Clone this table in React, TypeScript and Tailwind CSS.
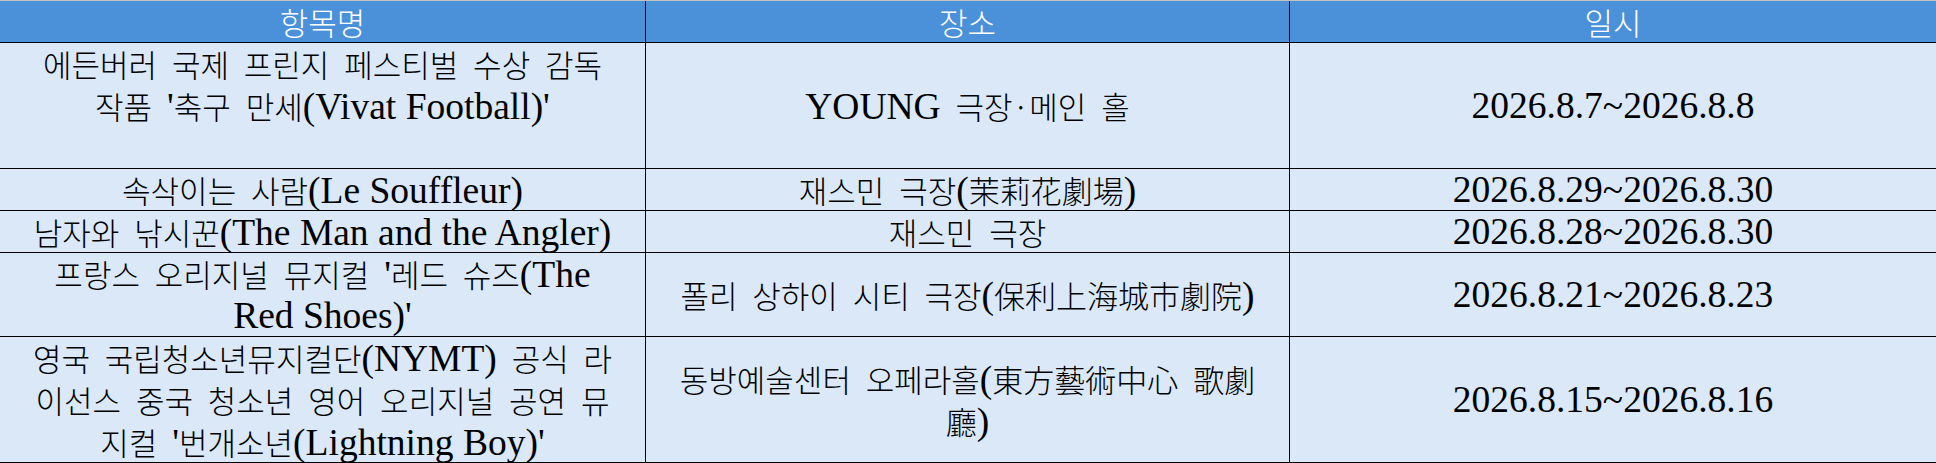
const LATIN = /([A-Za-z0-9.~()'\-]+(?: +[A-Za-z0-9.~()'\-]+)*)/

function Mixed({ text }: { text: string }) {
  const parts = text.split(LATIN)
  return (
    <>
      {parts.map((p, i) =>
        p === '' ? null : i % 2 === 1 ? (
          <span key={i} className="font-['Liberation_Serif',serif] text-[37.5px] leading-[42px]">
            {p}
          </span>
        ) : (
          <span key={i} className="font-['Noto_Sans_CJK_KR',sans-serif] text-[31px] font-light leading-[42px] [word-spacing:8px]">
            {p}
          </span>
        ),
      )}
    </>
  )
}

type Cell = { lines: string[]; top?: boolean }
type Row = { h: string; cells: Cell[] }

const rows: Row[] = [
  {
    h: 'h-[126px]',
    cells: [
      { lines: ['에든버러 국제 프린지 페스티벌 수상 감독', "작품 '축구 만세(Vivat Football)'"], top: true },
      { lines: ['YOUNG 극장·메인 홀'] },
      { lines: ['2026.8.7~2026.8.8'] },
    ],
  },
  {
    h: 'h-[42px]',
    cells: [
      { lines: ['속삭이는 사람(Le Souffleur)'] },
      { lines: ['재스민 극장(茉莉花劇場)'] },
      { lines: ['2026.8.29~2026.8.30'] },
    ],
  },
  {
    h: 'h-[42px]',
    cells: [
      { lines: ['남자와 낚시꾼(The Man and the Angler)'] },
      { lines: ['재스민 극장'] },
      { lines: ['2026.8.28~2026.8.30'] },
    ],
  },
  {
    h: 'h-[84px]',
    cells: [
      { lines: ["프랑스 오리지널 뮤지컬 '레드 슈즈(The", "Red Shoes)'"] },
      { lines: ['폴리 상하이 시티 극장(保利上海城市劇院)'] },
      { lines: ['2026.8.21~2026.8.23'] },
    ],
  },
  {
    h: 'h-[126px]',
    cells: [
      {
        lines: [
          '영국 국립청소년뮤지컬단(NYMT) 공식 라',
          '이선스 중국 청소년 영어 오리지널 공연 뮤',
          "지컬 '번개소년(Lightning Boy)'",
        ],
      },
      { lines: ['동방예술센터 오페라홀(東方藝術中心 歌劇', '廳)'] },
      { lines: ['2026.8.15~2026.8.16'] },
    ],
  },
]

const cols = ['border-r border-black', 'border-r border-black', '']

export default function App() {
  return (
    <div className="w-[1936px] h-[463px] overflow-hidden bg-white text-black">
      <div className="grid h-[43px] grid-cols-[646px_644px_646px] border-t border-b border-t-[#c3c3c3] border-b-black bg-[#4a91d9] text-white">
        {['항목명', '장소', '일시'].map((t, i) => (
          <div
            key={t}
            className={`flex items-center justify-center whitespace-nowrap font-['Noto_Sans_CJK_KR',sans-serif] text-[31px] font-light leading-[42px] ${cols[i]}`}
          >
            {t}
          </div>
        ))}
      </div>
      {rows.map((r, ri) => (
        <div key={ri} className={`grid grid-cols-[646px_644px_646px] border-b border-black bg-[#dae8f7] ${r.h}`}>
          {r.cells.map((c, ci) => (
            <div
              key={ci}
              className={`flex flex-col items-center ${c.top ? 'justify-start' : 'justify-center'} ${cols[ci]}`}
            >
              {c.lines.map((l, li) => (
                <div key={li} className="h-[42px] shrink-0 whitespace-nowrap text-center leading-[42px]">
                  <Mixed text={l} />
                </div>
              ))}
            </div>
          ))}
        </div>
      ))}
    </div>
  )
}
